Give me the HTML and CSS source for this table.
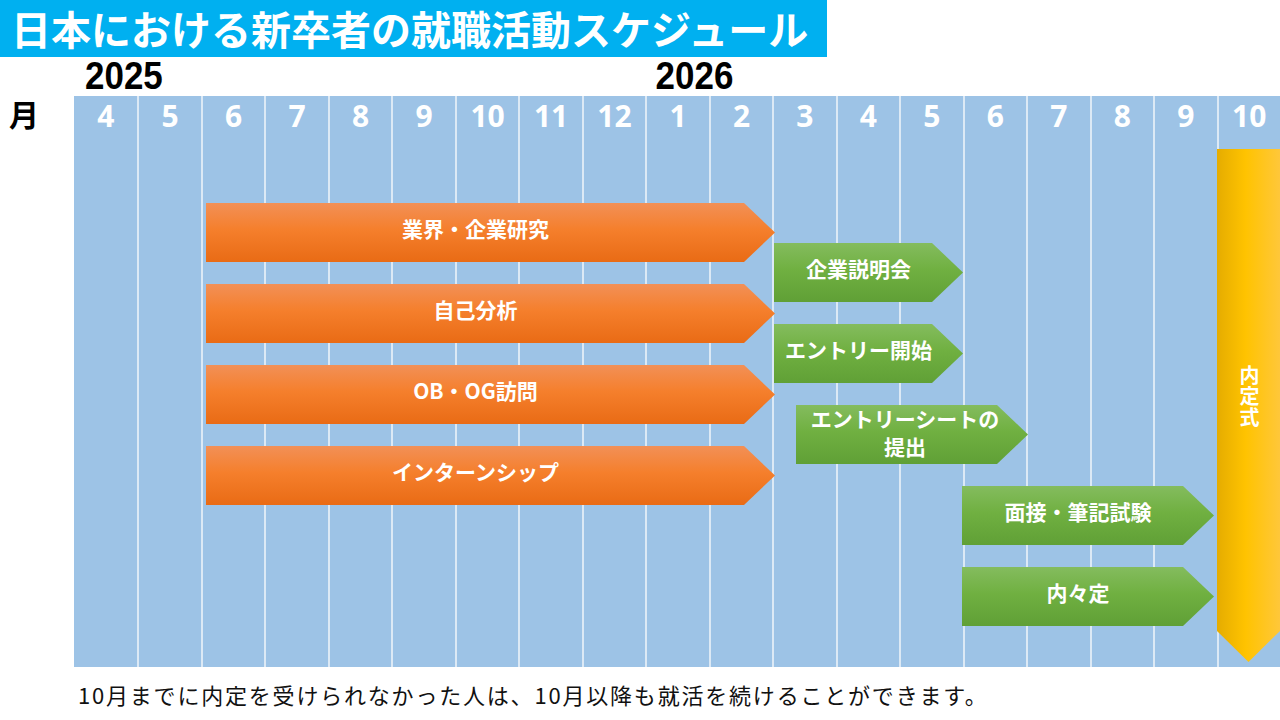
FILE: index.html
```html
<!DOCTYPE html>
<html lang="ja">
<head>
<meta charset="utf-8">
<title>日本における新卒者の就職活動スケジュール</title>
<link rel="stylesheet" href="styles.css">
</head>
<body>
<div class="page">
  <header class="title-bar">
    <h1 class="title">日本における新卒者の就職活動スケジュール</h1>
  </header>

  <div class="year-row">
    <div class="year-spacer"></div>
    <div class="year-grid">
      <span class="year year-2025">2025</span>
      <span class="year year-2026">2026</span>
    </div>
  </div>

  <div class="chart-row">
    <div class="axis-label">月</div>
    <div class="chart">
      <div class="columns">
        <div class="col"><span class="month">4</span></div>
        <div class="col"><span class="month">5</span></div>
        <div class="col"><span class="month">6</span></div>
        <div class="col"><span class="month">7</span></div>
        <div class="col"><span class="month">8</span></div>
        <div class="col"><span class="month">9</span></div>
        <div class="col"><span class="month">10</span></div>
        <div class="col"><span class="month">11</span></div>
        <div class="col"><span class="month">12</span></div>
        <div class="col"><span class="month">1</span></div>
        <div class="col"><span class="month">2</span></div>
        <div class="col"><span class="month">3</span></div>
        <div class="col"><span class="month">4</span></div>
        <div class="col"><span class="month">5</span></div>
        <div class="col"><span class="month">6</span></div>
        <div class="col"><span class="month">7</span></div>
        <div class="col"><span class="month">8</span></div>
        <div class="col"><span class="month">9</span></div>
        <div class="col"><span class="month">10</span></div>
      </div>

      <div class="bar orange" style="left:132px; top:107px; width:569px;">業界・企業研究</div>
      <div class="bar orange" style="left:132px; top:188px; width:569px;">自己分析</div>
      <div class="bar orange" style="left:132px; top:269px; width:569px;">OB・OG訪問</div>
      <div class="bar orange" style="left:132px; top:350px; width:569px;">インターンシップ</div>

      <div class="bar green" style="left:700px; top:147px; width:189px;">企業説明会</div>
      <div class="bar green" style="left:700px; top:228px; width:189px;">エントリー開始</div>
      <div class="bar green two-line" style="left:722px; top:309px; width:232px;">エントリーシートの<br>提出</div>
      <div class="bar green" style="left:888px; top:390px; width:252px;">面接・筆記試験</div>
      <div class="bar green" style="left:888px; top:471px; width:252px;">内々定</div>

      <div class="ceremony"><span class="ceremony-text">内定式</span></div>
    </div>
  </div>

  <p class="note">10月までに内定を受けられなかった人は、10月以降も就活を続けることができます。</p>
</div>
</body>
</html>
```

FILE: styles.css
```css
* {
  box-sizing: border-box;
}

html, body {
  margin: 0;
  padding: 0;
  background: #ffffff;
}

body {
  font-family: "Noto Sans CJK JP", "Noto Sans", sans-serif;
  color: #000000;
}

.page {
  width: 1280px;
  height: 720px;
  overflow: hidden;
  display: flex;
  flex-direction: column;
}

/* Title */
.title-bar {
  width: 827px;
  height: 57px;
  background: #00b0f0;
  display: flex;
  align-items: center;
  padding-left: 11px;
}

.title {
  margin: 0;
  font-size: 40px;
  line-height: 57px;
  font-weight: 700;
  color: #ffffff;
  letter-spacing: 0;
  white-space: nowrap;
}

/* Years */
.year-row {
  height: 39px;
  display: flex;
}

.year-spacer {
  width: 74px;
  flex: none;
}

.year-grid {
  flex: 1;
  display: grid;
  grid-template-columns: repeat(19, 1fr);
  align-items: start;
}

.year {
  font-family: "Liberation Sans", Arial, sans-serif;
  font-weight: 700;
  font-size: 38px;
  line-height: 38px;
  white-space: nowrap;
  transform: scaleX(0.92);
  transform-origin: left top;
}

.year-2025 {
  grid-column: 1;
  padding-left: 12px;
}

.year-2026 {
  grid-column: 10;
  padding-left: 5px;
}

/* Chart */
.chart-row {
  height: 571px;
  display: flex;
}

.axis-label {
  width: 74px;
  flex: none;
  padding-left: 9px;
  font-size: 30px;
  font-weight: 700;
  line-height: 34px;
}

.chart {
  flex: 1;
  position: relative;
  background: #9dc3e6;
}

.columns {
  height: 100%;
  display: grid;
  grid-template-columns: repeat(19, 1fr);
}

.col {
  border-left: 2px solid #dce9f5;
  text-align: center;
}

.col:first-child {
  border-left: none;
}

.month {
  display: block;
  color: #ffffff;
  font-family: "Noto Sans", sans-serif;
  font-weight: 700;
  font-size: 30px;
  line-height: 40px;
}

/* Bars (gantt items, positioned by date) */
.bar {
  position: absolute;
  height: 59px;
  display: flex;
  align-items: center;
  justify-content: center;
  padding-right: 30px;
  padding-bottom: 10px;
  color: #ffffff;
  font-weight: 700;
  font-size: 21px;
  line-height: 28px;
  text-align: center;
  white-space: nowrap;
  clip-path: polygon(0 0, calc(100% - 31px) 0, 100% 50%, calc(100% - 31px) 100%, 0 100%);
}

.bar.orange {
  background: linear-gradient(to bottom, #f29057 0%, #f57f2c 45%, #e96b15 100%);
}

.bar.green {
  background: linear-gradient(to bottom, #84bc5e 0%, #70b041 45%, #60a036 100%);
  padding-right: 20px;
}

.bar.two-line {
  padding-right: 14px;
  line-height: 28px;
  padding-bottom: 6px;
}

/* Ceremony arrow */
.ceremony {
  position: absolute;
  left: 1143px;
  top: 53px;
  width: 63px;
  height: 513px;
  background: linear-gradient(to right, #e5ac00 0%, #ffc300 45%, #ffc73a 100%);
  clip-path: polygon(0 0, 100% 0, 100% calc(100% - 31px), 50% 100%, 0 calc(100% - 31px));
  display: flex;
  justify-content: center;
  padding-top: 216px;
  padding-left: 1px;
}

.ceremony-text {
  writing-mode: vertical-rl;
  text-orientation: upright;
  color: #ffffff;
  font-weight: 700;
  font-size: 20px;
  letter-spacing: 1px;
  line-height: 20px;
}

/* Footer note */
.note {
  margin: 0;
  padding-left: 78px;
  height: 53px;
  display: flex;
  align-items: center;
  font-size: 22px;
  font-weight: 400;
  color: #111111;
  letter-spacing: 1.8px;
  white-space: nowrap;
}
```
